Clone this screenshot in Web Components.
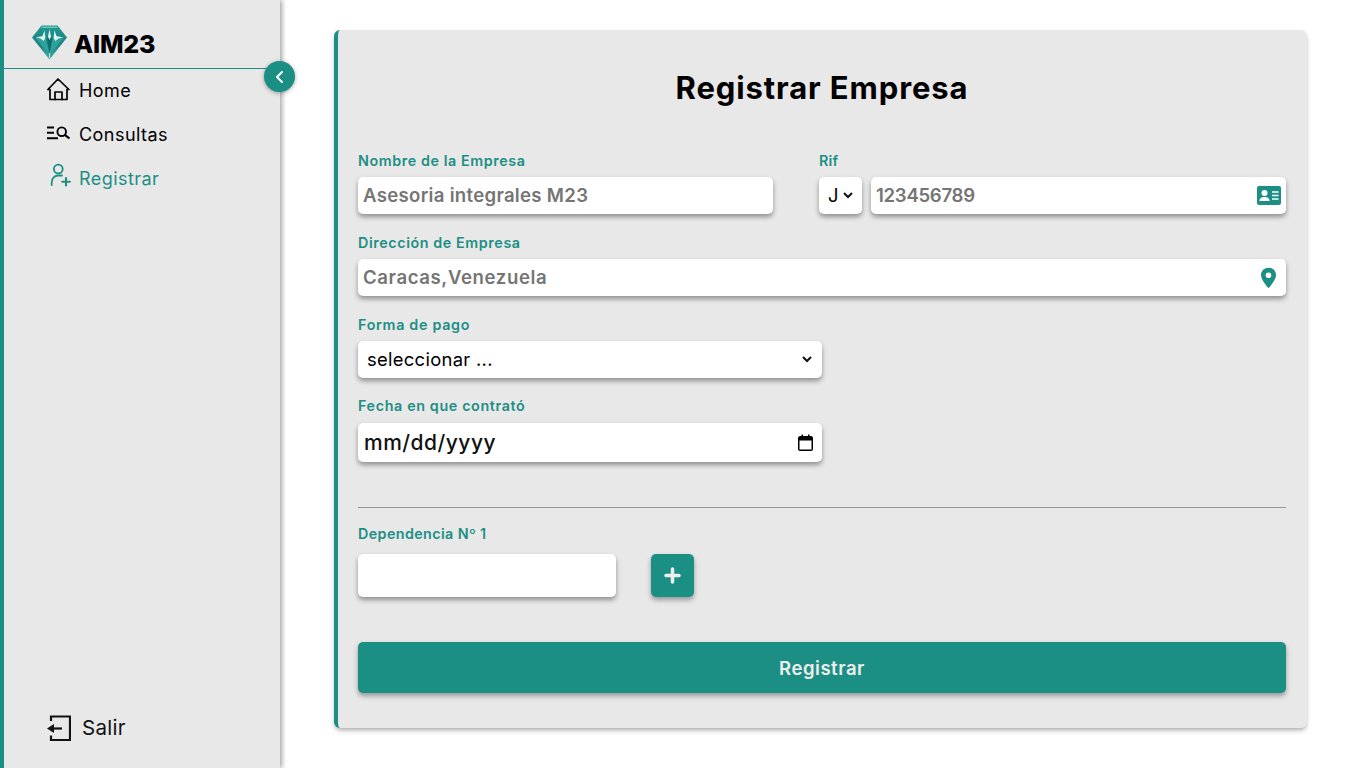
<!DOCTYPE html>
<html lang="es"><head><meta charset="utf-8"><title>Registrar Empresa</title>
<style>
html,body{margin:0;height:100%;background:#fff;overflow:hidden}
body{font-family:Inter,"Liberation Sans",sans-serif;--teal:#1c8f85;--panel:#e8e8e8}
svg{display:block}
</style></head><body>
<app-shell>
  <side-bar slot="side">
    <nav-item label="Home" kind="home"></nav-item>
    <nav-item label="Consultas" kind="search"></nav-item>
    <nav-item label="Registrar" kind="add" active></nav-item>
  </side-bar>
  <form-card slot="main" heading="Registrar Empresa">
    <div style="display:grid;grid-template-columns:415px 467px;column-gap:46px">
      <form-field label="Nombre de la Empresa"><text-box text="Asesoria integrales M23" ls=".3"></text-box></form-field>
      <form-field label="Rif" ls=".2"><div style="display:flex;gap:9px"><drop-box text="J" compact style="width:43px"></drop-box><text-box text="123456789" ls="-.3" icon="card" style="flex:1"></text-box></div></form-field>
    </div>
    <form-field label="Dirección de Empresa" style="margin-top:19px"><text-box text="Caracas,Venezuela" ls=".6" icon="pin"></text-box></form-field>
    <form-field label="Forma de pago" ls=".7" style="margin-top:19px;width:464px"><drop-box text="seleccionar ..."></drop-box></form-field>
    <form-field label="Fecha en que contrató" ls=".64" gap="7" style="margin-top:18px;width:464px"><date-box text="mm/dd/yyyy"></date-box></form-field>
    <div style="border-top:1px solid #959595;margin-top:45px"></div>
    <form-field label="Dependencia Nº 1" ls=".4" gap="10" style="margin-top:16px">
      <div style="display:flex;gap:35px"><text-box style="width:258px;height:43px"></text-box><plus-button></plus-button></div>
    </form-field>
    <submit-button style="margin-top:45px">Registrar</submit-button>
  </form-card>
</app-shell>
<script>
const ICONS={
home:'<svg width="26" height="26" viewBox="0 0 26 26" fill="none" stroke="#000" stroke-width="1.7" stroke-linejoin="round" stroke-linecap="round"><path d="M.9 11.500 11 1 21.900 11.500H20V21.500H3V11.500Z"/><path d="M8 21.500V14H15V21.500"/></svg>',
search:'<svg width="26" height="26" viewBox="0 0 26 26" fill="none" stroke="#000" stroke-width="1.9"><path d="M0 5.500H7M0 10.700H7M0 16.300H11"/><circle cx="14.700" cy="9.700" r="4.300"/><path d="M17.800 12.800 22.500 16.500" stroke-width="2.200"/></svg>',
add:'<svg width="26" height="26" viewBox="0 0 26 26" fill="none" stroke="#1c8f85" stroke-width="1.800" stroke-linecap="round" style="overflow:visible"><circle cx="11.300" cy="3" r="4.400"/><path d="M4.700 19V16.500C4.700 12 8 9.500 11 9.500H15"/><path d="M19 12V19.500M15.200 15.700H22.800" stroke-width="2.100"/></svg>'};
function def(name,html){customElements.define(name,class extends HTMLElement{
  connectedCallback(){if(this.shadowRoot)return;const r=this.attachShadow({mode:'open'});r.innerHTML=typeof html==='function'?html(this):html;}
});}
const fieldBase=`display:block;background:#fff;border-radius:5px;box-shadow:0 3px 5px rgba(0,0,0,.38);box-sizing:border-box;`;

def('app-shell',`<style>:host{display:flex;width:1360px;height:768px}
.side{flex:none;width:280px;display:flex}.main{flex:1;padding:30px 53px 40px 54px;box-sizing:border-box;min-width:0;display:flex}
::slotted([slot=main]){flex:1}::slotted([slot=side]){flex:1}</style>
<div class="side"><slot name="side"></slot></div><div class="main"><slot name="main"></slot></div>`);

def('side-bar',`<style>:host{display:flex;flex-direction:column;position:relative;box-sizing:border-box;background:var(--panel);border-left:4px solid var(--teal);box-shadow:2px 0 5px rgba(0,0,0,.36);height:768px}
.brand{height:68px;border-bottom:1px solid var(--teal);display:flex;align-items:flex-end;padding-left:28px;gap:7px}
.brand svg{margin-bottom:8px}
.name{font:800 25px/36px Inter,"Liberation Sans",sans-serif;color:#000;margin-bottom:6px;letter-spacing:-.2px}
nav{display:flex;flex-direction:column;padding-left:43px;flex:1}
.out{display:flex;align-items:center;gap:11px;padding:0 0 22px 43px;font:400 20.500px/36px Inter,"Liberation Sans",sans-serif;color:#111;letter-spacing:.3px}
.toggle{position:absolute;left:260px;top:61px;width:31px;height:31px;border-radius:50%;background:var(--teal);box-shadow:0 1px 4px rgba(0,0,0,.35);display:flex;align-items:center;justify-content:center}
</style>
<div class="brand"><svg width="35" height="35" viewBox="0 0 35 35">
<defs><linearGradient id="g" x1="0" y1="0" x2="0" y2="1"><stop offset="0" stop-color="#1f9a90"/><stop offset=".55" stop-color="#1c7f80"/><stop offset="1" stop-color="#45b3ad"/></linearGradient></defs>
<path d="M9.500 .5H25.500L35 12.500 17.500 34.500 0 12.500Z" fill="url(#g)"/>
<path d="M10 1.500H25L26 3H9Z" fill="#6fc4bd"/>
<path d="M3 12.500 10.500 11 12.500 4.500 14 12 17.500 30 8.500 19Z" fill="#2da29a"/>
<path d="M32 12.500 24.500 11 22.500 4.500 21 12 17.500 30 26.500 19Z" fill="#2da29a"/>
<path d="M17.500 8 20 14 17.500 28 15 14Z" fill="#0f6a70"/>
<path d="M4 12.300 10.500 11.300 12.500 5.500 13.300 13 11.500 16 8.500 13.500ZM31 12.300 24.500 11.300 22.500 5.500 21.700 13 23.500 16 26.500 13.500Z" fill="#e6f5f3"/>
<path d="M17.500 4.500 19 11.500 17.500 15 16 11.500Z" fill="#e6f5f3"/>
<path d="M17.500 28V33" stroke="#bfe7e3" stroke-width="1"/>
</svg><span class="name">AIM23</span></div>
<nav><slot></slot></nav>
<div class="out"><svg width="24" height="27" viewBox="0 0 24 27" fill="none" stroke="#111" stroke-width="2.200"><path d="M4 6V1.500H23V25H4V20.500"/><path d="M15 13.500H4"/><path d="M0 13.500 7 9V18Z" fill="#111" stroke="none"/></svg><span>Salir</span></div>
<div class="toggle"><svg width="12" height="14" viewBox="0 0 12 14" fill="none" stroke="#fff" stroke-width="2" stroke-linecap="round" stroke-linejoin="round"><path d="M8 2 3 7 8 12"/></svg></div>`);

def('nav-item',h=>{const act=h.hasAttribute('active');return `<style>:host{display:flex;align-items:center;height:44px;gap:6px;color:${act?'var(--teal)':'#000'};font:400 18px/24px Inter,"Liberation Sans",sans-serif;letter-spacing:.45px}
span{position:relative;top:-.5px}
</style>${ICONS[h.getAttribute('kind')]}<span>${h.getAttribute('label')}</span>`});

def('form-card',h=>`<style>:host{display:block;box-sizing:border-box;height:698px;background:var(--panel);border-left:4px solid var(--teal);border-radius:6px;box-shadow:0 3px 5px -1px rgba(0,0,0,.35);padding:36px 21px 35px 20px}
h1{margin:0 0 41px;text-align:center;font:700 31px/44px Inter,"Liberation Sans",sans-serif;letter-spacing:.9px;color:#000}</style>
<h1>${h.getAttribute('heading')}</h1><slot></slot>`);

def('form-field',h=>`<style>:host{display:block}
label{display:block;height:20px;font:600 14.300px/20px Inter,"Liberation Sans",sans-serif;letter-spacing:${h.getAttribute('ls')||.6}px;color:var(--teal);margin-bottom:${h.getAttribute('gap')||6}px}</style>
<label>${h.getAttribute('label')}</label><slot></slot>`);

const icons2={card:'<svg width="24" height="19" viewBox="0 0 24 19"><rect width="24" height="19" rx="2" fill="#1c8f85"/><circle cx="7.500" cy="7" r="3" fill="#fff"/><path d="M2.500 15C2.500 12 4.500 11 7.500 11S12.500 12 12.500 15Z" fill="#fff"/><path d="M15 6H21.500M15 9.500H21.500M15 13H21.500" stroke="#fff" stroke-width="1.500"/></svg>',
pin:'<svg width="15" height="22" viewBox="0 0 16 22"><path fill-rule="evenodd" d="M8 0C3.600 0 0 3.400 0 7.800 0 12.500 5.500 19 8 22 10.500 19 16 12.500 16 7.800 16 3.400 12.400 0 8 0ZM8 5A3 3 0 1 1 8 11 3 3 0 1 1 8 5Z" fill="#1c8f85"/></svg>'};
def('text-box',h=>{const i=h.getAttribute('icon');return `<style>:host{${fieldBase}height:37px;display:flex;align-items:center;justify-content:space-between;padding:0 ${i==='pin'?10:5}px 0 5px;font:600 18.600px/24px Inter,"Liberation Sans",sans-serif;color:#757575;letter-spacing:${h.getAttribute('ls')||0}px}
span{position:relative;top:-1px}</style>
<span>${h.getAttribute('text')||''}</span>${i?icons2[i]:''}`});

const chev='<svg width="10" height="7" viewBox="0 0 10 7" fill="none" stroke="#111" stroke-width="2"><path d="M1 1 5 5 9 1"/></svg>';
def('drop-box',h=>{const c=h.hasAttribute('compact');return `<style>:host{${fieldBase}height:37px;display:flex;align-items:center;justify-content:space-between;padding:0 ${c?9:10}px 0 9px;font:400 18.400px/24px Inter,"Liberation Sans",sans-serif;letter-spacing:.3px;color:#000}
span{position:relative;top:-1px}</style>
<span>${h.getAttribute('text')}</span>${chev}`});

def('date-box',h=>`<style>:host{${fieldBase}height:39px;display:flex;align-items:center;justify-content:space-between;padding:0 9px 0 6px;font:500 21px/28px Inter,"Liberation Sans",sans-serif;letter-spacing:.5px;color:#111}</style>
<span>${h.getAttribute('text')}</span><svg width="15" height="17" viewBox="0 0 15 17"><path fill="#000" d="M2 2H3.500V.5H5V2H10V.5H11.500V2H13C14 2 15 3 15 4V15C15 16 14 17 13 17H2C1 17 0 16 0 15V4C0 3 1 2 2 2ZM1.500 6.500V15.500H13.500V6.500Z"/></svg>`);

def('plus-button',`<style>:host{display:flex;align-items:center;justify-content:center;width:43px;height:43px;background:var(--teal);border-radius:5px;box-shadow:0 3px 5px rgba(0,0,0,.35)}</style>
<svg width="17" height="17" viewBox="0 0 17 17" fill="none" stroke="#eee" stroke-width="3.500" stroke-linecap="round"><path d="M8.500 2V15M2 8.500H15"/></svg>`);

def('submit-button',`<style>:host{display:flex;align-items:center;justify-content:center;height:51px;background:var(--teal);border-radius:5px;box-shadow:0 3px 5px rgba(0,0,0,.35);color:#eee;font:600 18.500px/24px Inter,"Liberation Sans",sans-serif;letter-spacing:.55px}</style><slot></slot>`);
</script>
</body></html>
